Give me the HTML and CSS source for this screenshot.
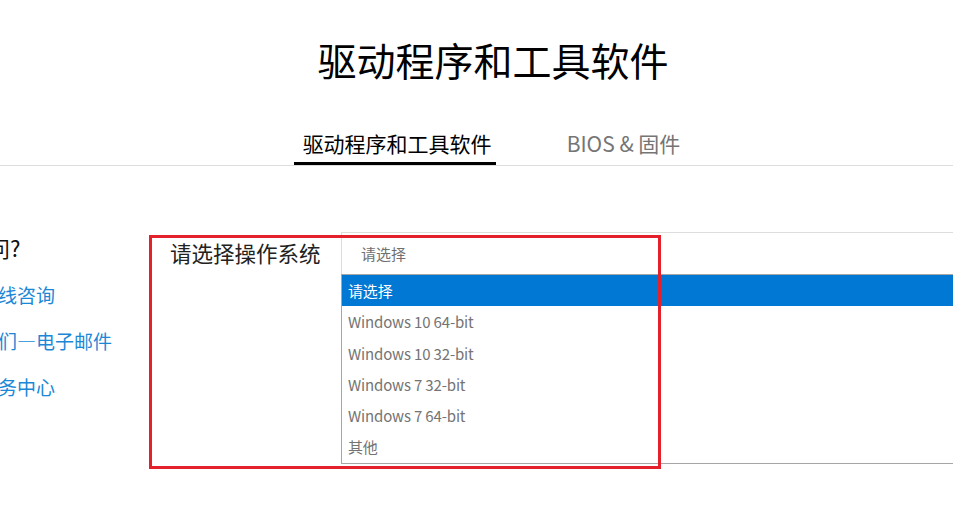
FILE: index.html
```html
<!DOCTYPE html>
<html lang="zh-CN">
<head>
  <meta charset="UTF-8" />
  <meta name="viewport" content="width=device-width, initial-scale=1.0"/>
  <title>驱动程序和工具软件</title>
  <link rel="stylesheet" href="styles.css">
</head>
<body>
  <div class="page">
    <h1 class="title">驱动程序和工具软件</h1>

    <div class="tabs">
      <a class="tab active">驱动程序和工具软件</a>
      <a class="tab">BIOS &amp; 固件</a>
    </div>

    <div class="main">
      <div class="sidebar">
        <h2>有疑问?</h2>
        <a class="link">在线咨询</a>
        <a class="link">我们—电子邮件</a>
        <a class="link">服务中心</a>
      </div>

      <div class="form">
        <div class="label">请选择操作系统</div>
        <div class="picker">
          <div class="select">请选择</div>
          <ul class="options">
            <li class="selected">请选择</li>
            <li>Windows 10 64-bit</li>
            <li>Windows 10 32-bit</li>
            <li>Windows 7 32-bit</li>
            <li>Windows 7 64-bit</li>
            <li>其他</li>
          </ul>
        </div>
        <div class="highlight"></div>
      </div>
    </div>
  </div>
</body>
</html>
```

FILE: styles.css
```css
html {
  overflow: hidden;
}
body {
  margin: 0;
  min-height: 524px;
  font-family: "Segoe UI", "Noto Sans CJK SC", sans-serif;
  background: #fff;
  color: #000;
}
.page {
  width: 1064px;
  min-height: 524px;
  margin-left: -40px;
  padding-left: 20px;
  box-sizing: border-box;
}
.title {
  margin: 0 0 0 -18px;
  padding-top: 34px;
  font-size: 39px;
  line-height: 50px;
  font-weight: normal;
  text-align: center;
}
.tabs {
  margin: 45px 0 0 -26px;
  display: flex;
  justify-content: center;
  gap: 62px;
  border-bottom: 1px solid #ddd;
}
.tab {
  font-size: 21px;
  line-height: 28px;
  padding: 0 4px 5px 9px;
  border-bottom: 3px solid transparent;
  color: #757575;
}
.tab.active {
  color: #000;
  border-bottom-color: #000;
}
.main {
  display: flex;
  margin-top: 66px;
  padding-bottom: 40px;
}
.sidebar {
  width: 191px;
  flex-shrink: 0;
}
.sidebar h2 {
  margin: 0 0 19px -36px;
  font-size: 22px;
  line-height: 30px;
  font-weight: normal;
  color: #111;
}
.link {
  display: block;
  font-size: 19px;
  line-height: 27px;
  margin: 0 0 19px -1px;
  color: #1a88d6;
}
.form {
  position: relative;
  flex: 1;
  display: flex;
}
.label {
  width: 171px;
  flex-shrink: 0;
  margin-left: -1px;
  font-size: 21.5px;
  line-height: 42px;
  color: #222;
}
.picker {
  flex: 1;
}
.select {
  height: 41px;
  border: 1px solid #ddd;
  border-bottom: none;
  padding-left: 19px;
  font-size: 15px;
  line-height: 41px;
  color: #707070;
}
.options {
  list-style: none;
  margin: 0;
  padding: 0;
  border: 1px solid #a6a6a6;
}
.options li {
  height: 31.3px;
  line-height: 31.3px;
  padding-left: 6px;
  font-size: 15px;
  letter-spacing: -0.15px;
  color: #747474;
}
.options li.selected {
  background: #0078d4;
  color: #fff;
}
.highlight {
  position: absolute;
  left: -22px;
  top: 3px;
  width: 512px;
  height: 234px;
  border: 3px solid #e3202c;
  box-sizing: border-box;
}
```
